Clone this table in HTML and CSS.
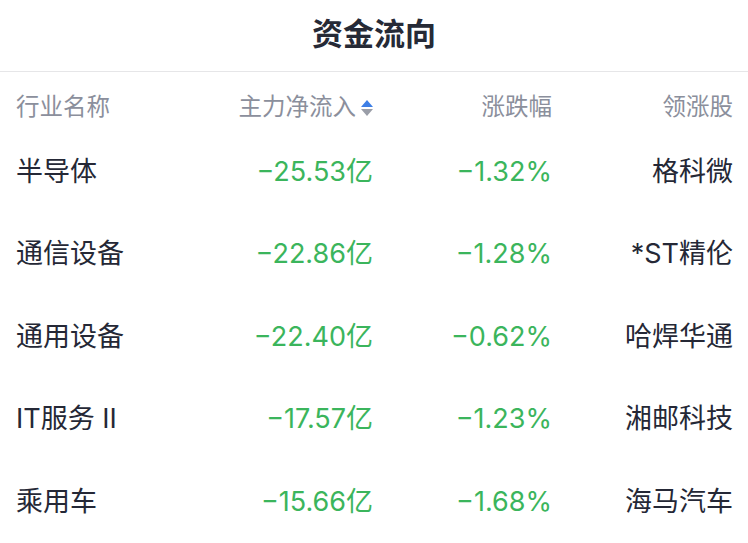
FILE: index.html
```html
<!DOCTYPE html>
<html lang="zh-CN">
<head>
<meta charset="utf-8">
<title>资金流向</title>
<link rel="stylesheet" href="styles.css">
</head>
<body>
<div class="page">
  <div class="title">资金流向</div>
  <div class="table">
    <div class="row head">
      <div class="c1">行业名称</div>
      <div class="c2">主力净流入<span class="sort"><i class="up"></i><i class="down"></i></span></div>
      <div class="c3">涨跌幅</div>
      <div class="c4">领涨股</div>
    </div>
    <div class="row">
      <div class="c1">半导体</div>
      <div class="c2 g">−25.53亿</div>
      <div class="c3 g">−1.32%</div>
      <div class="c4">格科微</div>
    </div>
    <div class="row">
      <div class="c1">通信设备</div>
      <div class="c2 g">−22.86亿</div>
      <div class="c3 g">−1.28%</div>
      <div class="c4">*ST精伦</div>
    </div>
    <div class="row">
      <div class="c1">通用设备</div>
      <div class="c2 g">−22.40亿</div>
      <div class="c3 g">−0.62%</div>
      <div class="c4">哈焊华通</div>
    </div>
    <div class="row">
      <div class="c1">IT服务 II</div>
      <div class="c2 g">−17.57亿</div>
      <div class="c3 g">−1.23%</div>
      <div class="c4">湘邮科技</div>
    </div>
    <div class="row">
      <div class="c1">乘用车</div>
      <div class="c2 g">−15.66亿</div>
      <div class="c3 g">−1.68%</div>
      <div class="c4">海马汽车</div>
    </div>
  </div>
</div>
</body>
</html>
```
FILE: styles.css
```css
* { box-sizing: border-box; margin: 0; padding: 0; }
html, body { background: #ffffff; }
body {
  font-family: "Inter", "Noto Sans CJK SC", sans-serif;
  color: #252836;
}
.page { width: 748px; }
.title {
  height: 72px;
  line-height: 64px;
  text-align: center;
  font-size: 31px;
  font-weight: 600;
  color: #262a36;
  border-bottom: 1px solid #e6e6e8;
  font-family: "Noto Sans CJK SC", sans-serif;
}
.table { padding: 0 15px 0 16px; }
.row {
  display: grid;
  grid-template-columns: 184px 173px 179px 181px;
  height: 82.5px;
  align-items: center;
  font-size: 27px;
  line-height: 34px;
  padding-top: 3px;
}
.row.head {
  height: 57px;
  align-items: start;
  padding-top: 20px;
  font-size: 23.5px;
  line-height: 30px;
  color: #8b8f9c;
}
.c2, .c3, .c4 { text-align: right; }
.g { color: #3bb55c; font-weight: 400; }
.head .c2 { display: flex; justify-content: flex-end; align-items: center; }
.sort {
  display: inline-flex;
  flex-direction: column;
  gap: 2px;
  margin-left: 5px;
  margin-top: 2px;
}
.sort i {
  display: block;
  width: 0; height: 0;
  border-left: 6px solid transparent;
  border-right: 6px solid transparent;
}
.sort .up { border-bottom: 7px solid #3e7fe6; }
.sort .down { border-top: 7px solid #9a9ea8; }
```
